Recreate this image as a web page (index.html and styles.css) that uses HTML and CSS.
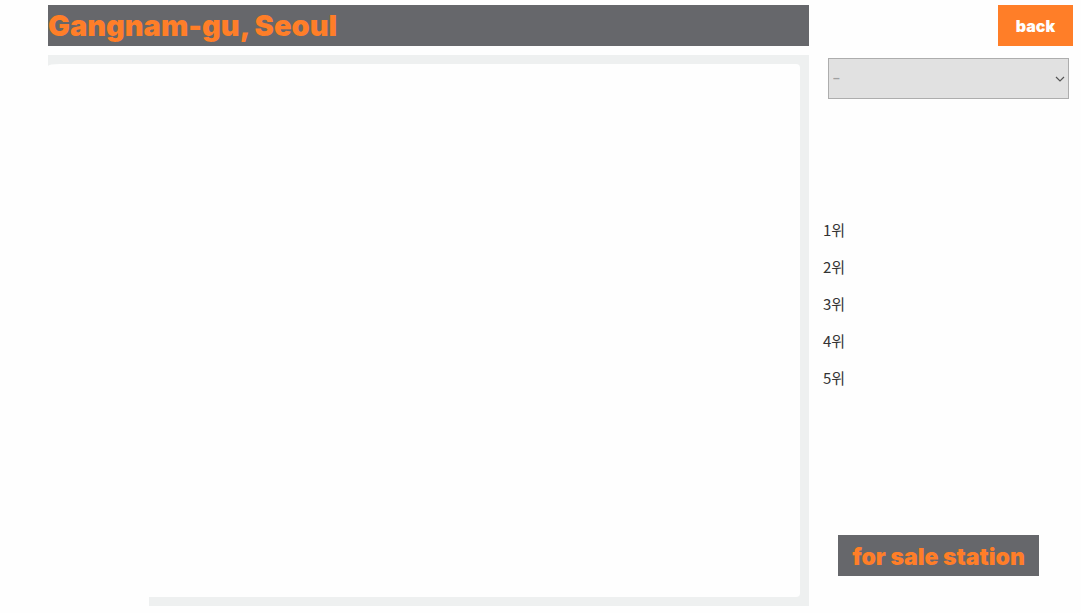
FILE: index.html
```html
<!DOCTYPE html>
<html lang="ko">
<head>
<meta charset="utf-8">
<title>Gangnam-gu, Seoul</title>
<link rel="stylesheet" href="styles.css">
</head>
<body>
<div class="page">
  <header class="header">
    <h1 class="title">Gangnam-gu, Seoul</h1>
    <button class="back" type="button">back</button>
  </header>
  <div class="content">
    <main class="frame">
      <div class="canvas"></div>
      <div class="frame-foot"></div>
    </main>
    <aside class="side">
      <div class="picker">
        <select class="select" aria-label="Station"><option>–</option></select>
        <svg class="chevron" viewBox="0 0 10 6" aria-hidden="true"><path d="M1 1l4 4 4-4"/></svg>
      </div>
      <ul class="ranks">
        <li>1위</li>
        <li>2위</li>
        <li>3위</li>
        <li>4위</li>
        <li>5위</li>
      </ul>
      <button class="sale" type="button">for sale station</button>
    </aside>
  </div>
</div>
</body>
</html>
```
FILE: styles.css
```css
* { box-sizing: border-box; }
body {
  margin: 0;
  background: #fefefe;
  font-family: "Noto Sans", "Noto Sans CJK KR", sans-serif;
}
button {
  border: 0;
  padding: 0;
  height: 41px;
  font-family: Inter, "Liberation Sans", sans-serif;
  font-weight: 900;
}
.page {
  display: flex;
  flex-direction: column;
  gap: 9px;
  min-height: 100vh;
  padding: 5px 0 7px 48px;
}
.header, .content {
  display: grid;
  grid-template-columns: 1fr 272px;
}
.title {
  margin: 0;
  padding-top: 1px;
  background: #66676b;
  color: #ff7e28;
  font: 900 29px/40px Inter, "Liberation Sans", sans-serif;
}
.back {
  justify-self: end;
  width: 75px;
  margin-right: 8px;
  background: #ff7e28;
  color: #fefefe;
  font-size: 16px;
}
.content { flex: 1; }
.frame {
  display: flex;
  flex-direction: column;
  padding: 9px 0 0;
  background: #eef0f0;
}
.canvas {
  flex: 1;
  margin-right: 9px;
  background: #fefefe;
  border-radius: 12px 4px 4px 0 / 2px 4px 4px 0;
}
.frame-foot {
  height: 9px;
  width: 101px;
  background: #fefefe;
}
.side {
  display: flex;
  flex-direction: column;
  padding: 3px 12px 30px 14px;
}
.picker {
  position: relative;
  margin-left: 5px;
}
.select {
  display: block;
  appearance: none;
  width: 100%;
  height: 41px;
  padding: 0 4px 2px;
  border: 1px solid #adadad;
  border-radius: 0;
  background: #e1e1e1;
  color: #a0a0a0;
  font: bold 12px "Liberation Sans", sans-serif;
}
.chevron {
  position: absolute;
  right: 4px;
  top: 18px;
  width: 10px;
  height: 6px;
  fill: none;
  stroke: #555;
  stroke-width: 1.2;
}
.ranks {
  display: flex;
  flex-direction: column;
  gap: 13px;
  margin: 119px 0 0;
  padding: 0;
  list-style: none;
  color: #333;
  font-family: "Noto Sans CJK KR", sans-serif;
  font-size: 15px;
  line-height: 24px;
}
.sale {
  width: 201px;
  margin: auto 0 0 15px;
  padding-top: 2px;
  background: #66676b;
  color: #ff7e28;
  font-size: 23px;
}
```
